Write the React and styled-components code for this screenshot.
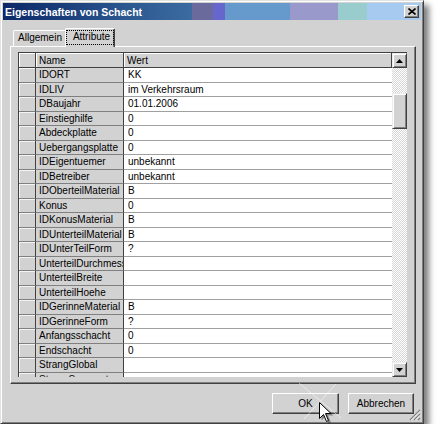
import React from 'react';
import styled, { createGlobalStyle } from 'styled-components';

const FACE = '#d2d2d2';

const GlobalStyle = createGlobalStyle`
  html, body { margin: 0; padding: 0; background: #fff; }
  body { font-family: "Liberation Sans", Arial, sans-serif; font-size: 10px; color: #000; }
  * { box-sizing: border-box; }
`;

const Window = styled.div`
  position: relative;
  width: 424px;
  height: 424px;
  background: ${FACE};
  border: 1px solid;
  border-color: #e2e2e2 #404040 #404040 #e2e2e2;
  box-shadow: inset 1px 1px 0 #fff, inset -1px -1px 0 #808080, 5px 5px 6px rgba(0, 0, 0, 0.5);
  padding: 2px;
  display: flex;
  flex-direction: column;
`;

const TitleBar = styled.div`
  height: 17px;
  display: flex;
  align-items: center;
  padding: 0 2px 0 2px;
  background: linear-gradient(
    to right,
    #0c2868 0%,
    #183a76 12%,
    #2c5890 30%,
    #3b6ba1 45.2%,
    #6a6a9c 45.2%,
    #6a6a9c 50.2%,
    #6666cc 50.2%,
    #6666cc 53.1%,
    #6699cc 53.1%,
    #6699cc 68.7%,
    #9999cc 68.7%,
    #9999cc 80.1%,
    #99cccc 80.1%,
    #99cccc 87.1%,
    #a6caf0 87.1%
  );
`;

const TitleText = styled.span`
  color: #fff;
  font-weight: bold;
  font-size: 10.5px;
  white-space: nowrap;
`;

const CloseButton = styled.div`
  margin-left: auto;
  width: 15px;
  height: 13px;
  background: ${FACE};
  border: 1px solid;
  border-color: #fff #404040 #404040 #fff;
  box-shadow: inset -1px -1px 0 #808080;
  display: flex;
  align-items: center;
  justify-content: center;
`;

const Content = styled.div`
  flex: 1;
  display: flex;
  flex-direction: column;
  padding: 8px 5px 0 7px;
`;

const TabStrip = styled.div`
  height: 18px;
  display: flex;
  align-items: flex-end;
  padding-left: 3px;
  position: relative;
  z-index: 1;
`;

const Tab = styled.div`
  width: ${p => p.$w}px;
  height: ${p => (p.$active ? 19 : 16)}px;
  margin: ${p => (p.$active ? '0 -2px -1px -2px' : '0')};
  position: relative;
  z-index: ${p => (p.$active ? 2 : 1)};
  background: ${FACE};
  border-top: 1px solid #fff;
  border-left: 1px solid #fff;
  border-right: 1px solid #404040;
  box-shadow: inset -1px 0 0 #808080;
  border-radius: 2px 2px 0 0;
  display: flex;
  align-items: ${p => (p.$active ? 'flex-start' : 'center')};
  justify-content: center;
  padding-top: ${p => (p.$active ? '2px' : '0')};
`;

const TabLabel = styled.span`
  display: block;
  padding: 0 3px;
  height: 13px;
  line-height: 12px;
  outline: ${p => (p.$focus ? '1px dotted #000' : 'none')};
  outline-offset: 0;
  padding-left: ${p => (p.$focus ? 6 : 3)}px;
  padding-right: ${p => (p.$focus ? 3 : 3)}px;
`;

const Panel = styled.div`
  height: 338px;
  width: 406px;
  background: ${FACE};
  border: 1px solid;
  border-color: #fff #404040 #404040 #fff;
  box-shadow: inset -1px -1px 0 #808080;
  padding: 5px 8px 6px 7px;
`;

const GridFrame = styled.div`
  width: 389px;
  height: 325px;
  display: flex;
  border-top: 1px solid #404040;
  border-left: 1px solid #404040;
  overflow: hidden;
  background: ${FACE};
`;

const Table = styled.div`
  flex: 1;
  display: grid;
  grid-template-columns: 17px 88px 1fr;
  grid-template-rows: 15px;
  grid-auto-rows: 14.5px;
  overflow: hidden;
  align-content: start;
`;

const HeadCell = styled.div`
  background: ${FACE};
  box-shadow: inset 1px 1px 0 #fff;
  border-right: 1px solid #404040;
  border-bottom: 1px solid #404040;
  padding-left: ${p => (p.$pad ? 3 : 0)}px;
  display: flex;
  align-items: center;
  white-space: nowrap;
`;

const RowHead = styled.div`
  background: ${FACE};
  box-shadow: inset 1px 1px 0 #f4f4f4;
  border-right: 1px solid #404040;
  border-bottom: 1px solid #808080;
`;

const NameCell = styled.div`
  background: ${FACE};
  border-right: 1px solid #404040;
  border-bottom: 1px solid #808080;
  padding-left: 3px;
  display: flex;
  align-items: center;
  white-space: nowrap;
  overflow: hidden;
`;

const ValueCell = styled.div`
  background: #fff;
  border-bottom: 1px solid #a0a0a0;
  padding-left: 4px;
  display: flex;
  align-items: center;
  white-space: nowrap;
  overflow: hidden;
`;

const ScrollBar = styled.div`
  width: 15px;
  display: flex;
  flex-direction: column;
`;

const ScrollButton = styled.div`
  height: 15px;
  flex: none;
  background: ${FACE};
  border: 1px solid;
  border-color: #ececec #404040 #404040 #ececec;
  box-shadow: inset 1px 1px 0 #fff, inset -1px -1px 0 #808080;
  display: flex;
  align-items: center;
  justify-content: center;
`;

const Track = styled.div`
  flex: 1;
  background-color: #fff;
  background-image: conic-gradient(#d6d6d6 25%, #fff 0 50%, #d6d6d6 0 75%, #fff 0);
  background-size: 2px 2px;
`;

const Thumb = styled.div`
  height: ${p => p.$size}px;
  margin-top: ${p => p.$offset}px;
  background: ${FACE};
  border: 1px solid;
  border-color: #ececec #404040 #404040 #ececec;
  box-shadow: inset 1px 1px 0 #fff, inset -1px -1px 0 #808080;
`;

const ButtonRow = styled.div`
  display: flex;
  justify-content: flex-end;
  gap: 9px;
  margin-top: 9px;
  padding-right: 2px;
`;

const Button = styled.div`
  width: ${p => p.$w}px;
  height: 21px;
  background: ${FACE};
  border: 1px solid;
  border-color: #fff #404040 #404040 #fff;
  box-shadow: inset -1px -1px 0 #808080;
  display: flex;
  align-items: center;
  justify-content: center;
  font-size: 10px;
`;

const Grip = styled.svg`
  position: absolute;
  right: 2px;
  bottom: 2px;
`;

const Cursor = styled.svg`
  position: absolute;
  left: 295px;
  top: 377px;
  pointer-events: none;
`;

const rows = [
  ['IDORT', 'KK'],
  ['IDLIV', 'im Verkehrsraum'],
  ['DBaujahr', '01.01.2006'],
  ['Einstieghilfe', '0'],
  ['Abdeckplatte', '0'],
  ['Uebergangsplatte', '0'],
  ['IDEigentuemer', 'unbekannt'],
  ['IDBetreiber', 'unbekannt'],
  ['IDOberteilMaterial', 'B'],
  ['Konus', '0'],
  ['IDKonusMaterial', 'B'],
  ['IDUnterteilMaterial', 'B'],
  ['IDUnterTeilForm', '?'],
  ['UnterteilDurchmesser', ''],
  ['UnterteilBreite', ''],
  ['UnterteilHoehe', ''],
  ['IDGerinneMaterial', 'B'],
  ['IDGerinneForm', '?'],
  ['Anfangsschacht', '0'],
  ['Endschacht', '0'],
  ['StrangGlobal', ''],
  ['StrangSegment', ''],
];

const UpArrow = () => (
  <svg width="7" height="4" viewBox="0 0 7 4"><path d="M3.5 0 L7 4 L0 4 Z" fill="#000" /></svg>
);
const DownArrow = () => (
  <svg width="7" height="4" viewBox="0 0 7 4"><path d="M0 0 L7 0 L3.5 4 Z" fill="#000" /></svg>
);

export default function App() {
  return (
    <>
      <GlobalStyle />
      <Window>
        <TitleBar>
          <TitleText>Eigenschaften von Schacht</TitleText>
          <CloseButton>
            <svg width="8" height="7" viewBox="0 0 8 7">
              <path d="M0.5 0.5 L7.5 6.5 M7.5 0.5 L0.5 6.5" stroke="#000" strokeWidth="1.6" />
            </svg>
          </CloseButton>
        </TitleBar>
        <Content>
          <TabStrip>
            <Tab $w={54}><TabLabel>Allgemein</TabLabel></Tab>
            <Tab $w={50} $active><TabLabel $focus>Attribute</TabLabel></Tab>
          </TabStrip>
          <Panel>
            <GridFrame>
              <Table>
                <HeadCell />
                <HeadCell $pad>Name</HeadCell>
                <HeadCell $pad>Wert</HeadCell>
                {rows.map(([n, v]) => (
                  <React.Fragment key={n}>
                    <RowHead />
                    <NameCell>{n}</NameCell>
                    <ValueCell>{v}</ValueCell>
                  </React.Fragment>
                ))}
              </Table>
              <ScrollBar>
                <ScrollButton><UpArrow /></ScrollButton>
                <Track>
                  <Thumb $size={36} $offset={25} />
                </Track>
                <ScrollButton><DownArrow /></ScrollButton>
              </ScrollBar>
            </GridFrame>
          </Panel>
          <ButtonRow>
            <Button $w={67}>OK</Button>
            <Button $w={66}>Abbrechen</Button>
          </ButtonRow>
        </Content>
        <Grip width="12" height="12" viewBox="0 0 12 12">
          <path d="M11 1 L1 11 M11 5 L5 11 M11 9 L9 11" stroke="#808080" strokeWidth="1.2" />
          <path d="M11 2.4 L2.4 11 M11 6.4 L6.4 11" stroke="#fff" strokeWidth="0.8" />
        </Grip>
        <Cursor width="50" height="50" viewBox="0 0 50 50">
          <path d="M3 5 L45 40 M40 6 L8 41" stroke="#fff" strokeWidth="1" opacity="0.55" />
          <path d="M25.5 26.5 L25.5 42.5 L29.5 38.5 L32.5 45.5 L35 44.5 L32 37.5 L37.5 37.5 Z" fill="rgba(0,0,0,0.35)" />
          <path d="M23.5 24.5 L23.5 40.5 L27.5 36.5 L30.5 43.5 L32.5 42.5 L29.5 35.5 L35 35.5 Z" fill="#fff" stroke="#000" strokeWidth="1" strokeLinejoin="miter" />
        </Cursor>
      </Window>
    </>
  );
}
